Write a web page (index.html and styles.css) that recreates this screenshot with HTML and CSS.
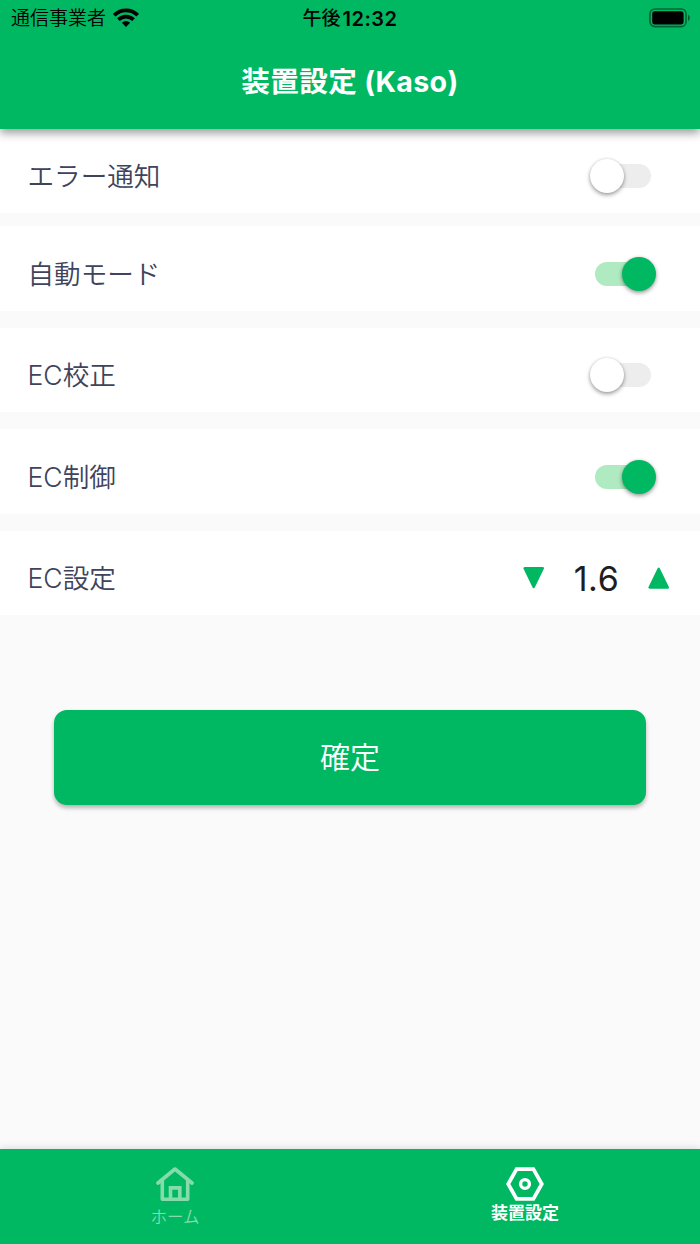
FILE: index.html
```html
<!DOCTYPE html>
<html lang="ja">
<head>
<meta charset="utf-8">
<title>装置設定</title>
<link rel="stylesheet" href="styles.css">
</head>
<body>
<div class="app">
  <header class="header">
    <div class="status">
      <div class="carrier">
        <span>通信事業者</span>
        <svg class="wifi" width="26" height="19" viewBox="0 0 26 19">
          <g fill="none" stroke="#000" stroke-width="3.8">
            <path d="M1.2 7.2C8 .8 18 .8 24.8 7.2"/>
            <path d="M5.4 11.7C9.8 7.6 16.2 7.6 20.6 11.7"/>
          </g>
          <path d="M8.9 14.8Q13 11.4 17.1 14.8L13 19Z"/>
        </svg>
      </div>
      <div class="clock"><span>午後</span><span class="digits">12:32</span></div>
      <svg class="battery" width="42" height="20" viewBox="0 0 42 20">
        <rect x="1" y="1" width="36" height="17.6" rx="4.8" fill="none" stroke="#000" stroke-opacity=".45" stroke-width="1.7"/>
        <rect x="3.2" y="3.2" width="31.4" height="13.2" rx="2.7"/>
        <path d="M39 6.8C41.3 7.8 41.3 12 39 13Z" fill-opacity=".5"/>
      </svg>
    </div>
    <h1 class="title">装置設定 (Kaso)</h1>
  </header>
  <main class="main">
    <section class="row row-first"><span class="label">エラー通知</span><span class="switch"><i class="thumb"></i></span></section>
    <section class="row"><span class="label">自動モード</span><span class="switch on"><i class="thumb"></i></span></section>
    <section class="row"><span class="label">EC校正</span><span class="switch"><i class="thumb"></i></span></section>
    <section class="row"><span class="label">EC制御</span><span class="switch on"><i class="thumb"></i></span></section>
    <section class="row row-stepper">
      <span class="label">EC設定</span>
      <div class="stepper">
        <svg width="22" height="22" viewBox="0 0 22 22"><path class="arrow" d="M1.6 1.3H19.8L10.7 20Z"/></svg>
        <span class="value">1.6</span>
        <svg width="22" height="22" viewBox="0 0 22 22"><path class="arrow" d="M1.6 20.5H19.8L10.7 1.8Z"/></svg>
      </div>
    </section>
    <button class="confirm">確定</button>
  </main>
  <nav class="nav">
    <a class="tab">
      <svg class="icon-home" width="38" height="36" viewBox="0 0 38 36" fill="none" stroke="currentColor" stroke-width="3.6" stroke-linecap="round" stroke-linejoin="round">
        <path d="M2 17L19 3L36 17"/><path d="M6.3 14.5V33.3H31.7V14.5"/><path d="M14.5 33V21.9H23.8V33" stroke-linejoin="miter"/>
      </svg>
      <span class="tab-label">ホーム</span>
    </a>
    <a class="tab active">
      <svg class="icon-hex" width="38" height="34" viewBox="0 0 38 34" fill="none" stroke="currentColor">
        <path d="M10.6 2.2H27.4L35.8 17L27.4 31.8H10.6L2.2 17Z" stroke-width="3.7"/><circle cx="19" cy="17" r="4.4" stroke-width="3.4"/>
      </svg>
      <span class="tab-label">装置設定</span>
    </a>
  </nav>
</div>
</body>
</html>
```
FILE: styles.css
```css
* { box-sizing: border-box; }
body {
  margin: 0;
  background: #fafafa;
  font-family: Inter, "Noto Sans CJK JP", sans-serif;
}
.app { display: flex; flex-direction: column; height: 1244px; overflow: hidden; }
.header {
  position: relative;
  z-index: 1;
  flex: none;
  height: 128.5px;
  background: #00b862;
  box-shadow: 0 4px 9px rgba(0, 0, 0, .4);
}
.status {
  display: grid;
  grid-template-columns: 1fr auto 1fr;
  align-items: center;
  height: 36px;
  padding: 0 9px 0 11px;
  color: #000;
}
.carrier { display: flex; align-items: center; gap: 7px; font-size: 19px; font-weight: 350; line-height: 36px; padding-top: 1px; }
.wifi { margin-bottom: 4px; }
.clock { display: flex; align-items: center; gap: 2px; margin-right: 2px; font-size: 19px; font-weight: 500; line-height: 36px; padding-top: 1px; }
.digits { font-size: 20px; font-weight: 600; letter-spacing: .5px; }
.battery { justify-self: end; margin-bottom: 2px; }
.title {
  margin: 24px 0 0;
  color: #fff;
  text-align: center;
  font-size: 28.6px;
  font-weight: 700;
  letter-spacing: .35px;
  line-height: 43px;
}
.main { display: flex; flex: 1; flex-direction: column; gap: 17px; }
.row {
  display: flex;
  align-items: center;
  justify-content: space-between;
  flex: none;
  height: 84.5px;
  padding: 11px 49px 0 27.5px;
  background: #fff;
}
.row-first { margin-bottom: -4px; }
.label { color: #40435c; font-size: 26.6px; font-weight: 350; line-height: 40px; }
.switch {
  display: flex;
  align-items: center;
  width: 56px;
  height: 24px;
  border-radius: 12px;
  background: #ededed;
}
.thumb {
  flex: none;
  width: 34px;
  height: 34px;
  margin: 0 -5px 0 -5.5px;
  border-radius: 50%;
  background: #fff;
  box-shadow: 0 2px 4px rgba(0, 0, 0, .38), 0 0 3px rgba(0, 0, 0, .1);
}
.on { justify-content: flex-end; background: #b0eac1; }
.on .thumb { background: #00b862; }
.row-stepper { padding-right: 30px; }
.stepper { display: flex; align-items: center; }
.arrow { fill: #00b862; stroke: #00b862; stroke-width: 2.4; stroke-linejoin: round; }
.value { width: 103px; color: #1e1e1e; text-align: center; font-size: 34px; letter-spacing: .6px; line-height: 40px; padding-top: 1px; }
.confirm {
  flex: none;
  height: 94.5px;
  margin: 78px 54px 0;
  padding: 0;
  border: 0;
  border-radius: 13px;
  background: #00b862;
  box-shadow: 0 3px 4px rgba(0, 0, 0, .28);
  color: #fff;
  font: 350 30px/94px Inter, "Noto Sans CJK JP", sans-serif;
}
.nav {
  display: grid;
  grid-template-columns: 1fr 1fr;
  flex: none;
  height: 95px;
  background: #00b862;
  box-shadow: 0 -1px 8px rgba(0, 0, 0, .13);
}
.tab { display: flex; flex-direction: column; align-items: center; padding-top: 17px; color: #86dbad; }
.tab-label { margin-top: 4px; font-size: 16.5px; font-weight: 350; line-height: 22px; }
.active { padding-top: 18px; color: #fff; }
.active .tab-label { margin-top: 1px; font-size: 17px; font-weight: 700; }
```
